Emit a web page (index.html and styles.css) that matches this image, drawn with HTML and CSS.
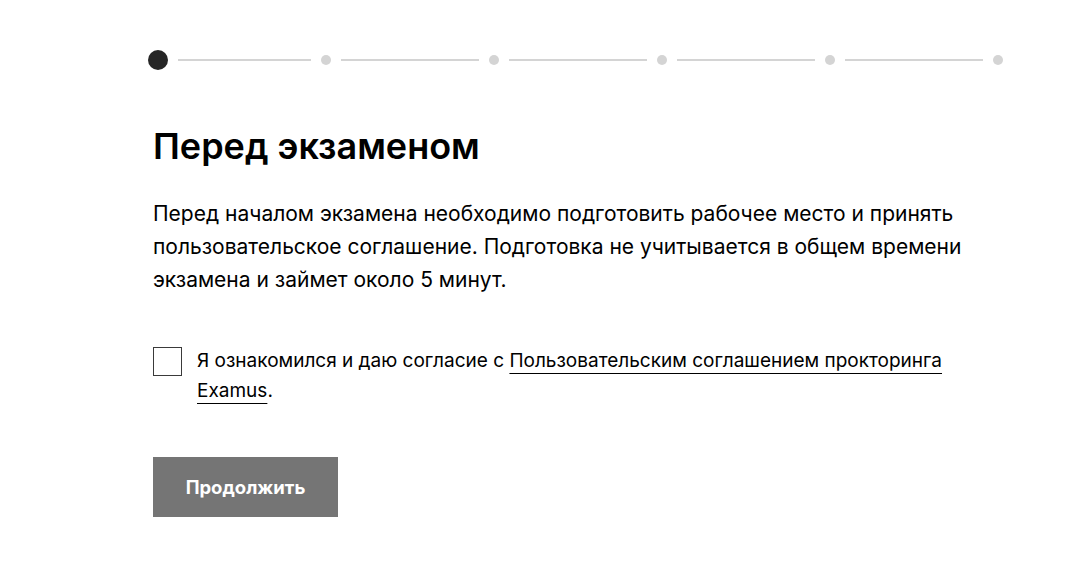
FILE: index.html
```html
<!DOCTYPE html>
<html lang="ru">
<head>
<meta charset="utf-8">
<title>Перед экзаменом</title>
<link rel="stylesheet" href="styles.css">
</head>
<body>
<main class="page">
  <div class="stepper">
    <span class="dot dot-active"></span>
    <span class="line line-first"></span>
    <span class="dot"></span>
    <span class="line"></span>
    <span class="dot"></span>
    <span class="line"></span>
    <span class="dot"></span>
    <span class="line"></span>
    <span class="dot"></span>
    <span class="line"></span>
    <span class="dot"></span>
  </div>
  <h1 class="title">Перед экзаменом</h1>
  <p class="lead">Перед началом экзамена необходимо подготовить рабочее место и принять пользовательское соглашение. Подготовка не учитывается в общем времени экзамена и займет около 5 минут.</p>
  <label class="agree">
    <span class="box"></span>
    <span class="agree-text">Я ознакомился и даю согласие с <a class="link" href="#">Пользовательским соглашением прокторинга Examus</a>.</span>
  </label>
  <button class="btn" type="button">Продолжить</button>
</main>
</body>
</html>
```
FILE: styles.css
```css
html, body {
  margin: 0;
  padding: 0;
  background: #ffffff;
}
body {
  font-family: Inter, "Noto Sans", sans-serif;
  color: #000000;
}
.page {
  padding: 50px 0 0 153px;
  width: 850px;
}
.stepper {
  display: flex;
  align-items: center;
  gap: 10px;
  margin-left: -5px;
  height: 20px;
}
.dot {
  flex: none;
  width: 10px;
  height: 10px;
  border-radius: 50%;
  background: #d4d4d4;
}
.dot-active {
  width: 20px;
  height: 20px;
  background: #262626;
}
.line {
  flex: 0 0 138px;
  height: 2px;
  background: #d4d4d4;
}
.line-first {
  flex-basis: 133px;
}
.title {
  margin: 54px 0 0;
  font-size: 36px;
  line-height: 44px;
  font-weight: 600;
  letter-spacing: 0;
}
.lead {
  margin: 29px 0 0;
  font-size: 21px;
  line-height: 33px;
  font-weight: 400;
  width: 830px;
}
.agree {
  display: flex;
  align-items: flex-start;
  gap: 15px;
  margin-top: 50px;
  width: 800px;
}
.box {
  flex: none;
  width: 27px;
  height: 27px;
  border: 1.5px solid #3a3a3a;
  margin-top: 1px;
}
.agree-text {
  font-size: 19px;
  line-height: 30px;
}
.link {
  color: #000000;
  text-decoration: underline;
  text-decoration-thickness: 1px;
  text-underline-offset: 6px;
}
.btn {
  display: block;
  margin-top: 51px;
  width: 185px;
  height: 60px;
  border: none;
  background: #757575;
  color: #ffffff;
  font-family: Inter, "Noto Sans", sans-serif;
  font-size: 18.5px;
  font-weight: 700;
  cursor: pointer;
}
```
